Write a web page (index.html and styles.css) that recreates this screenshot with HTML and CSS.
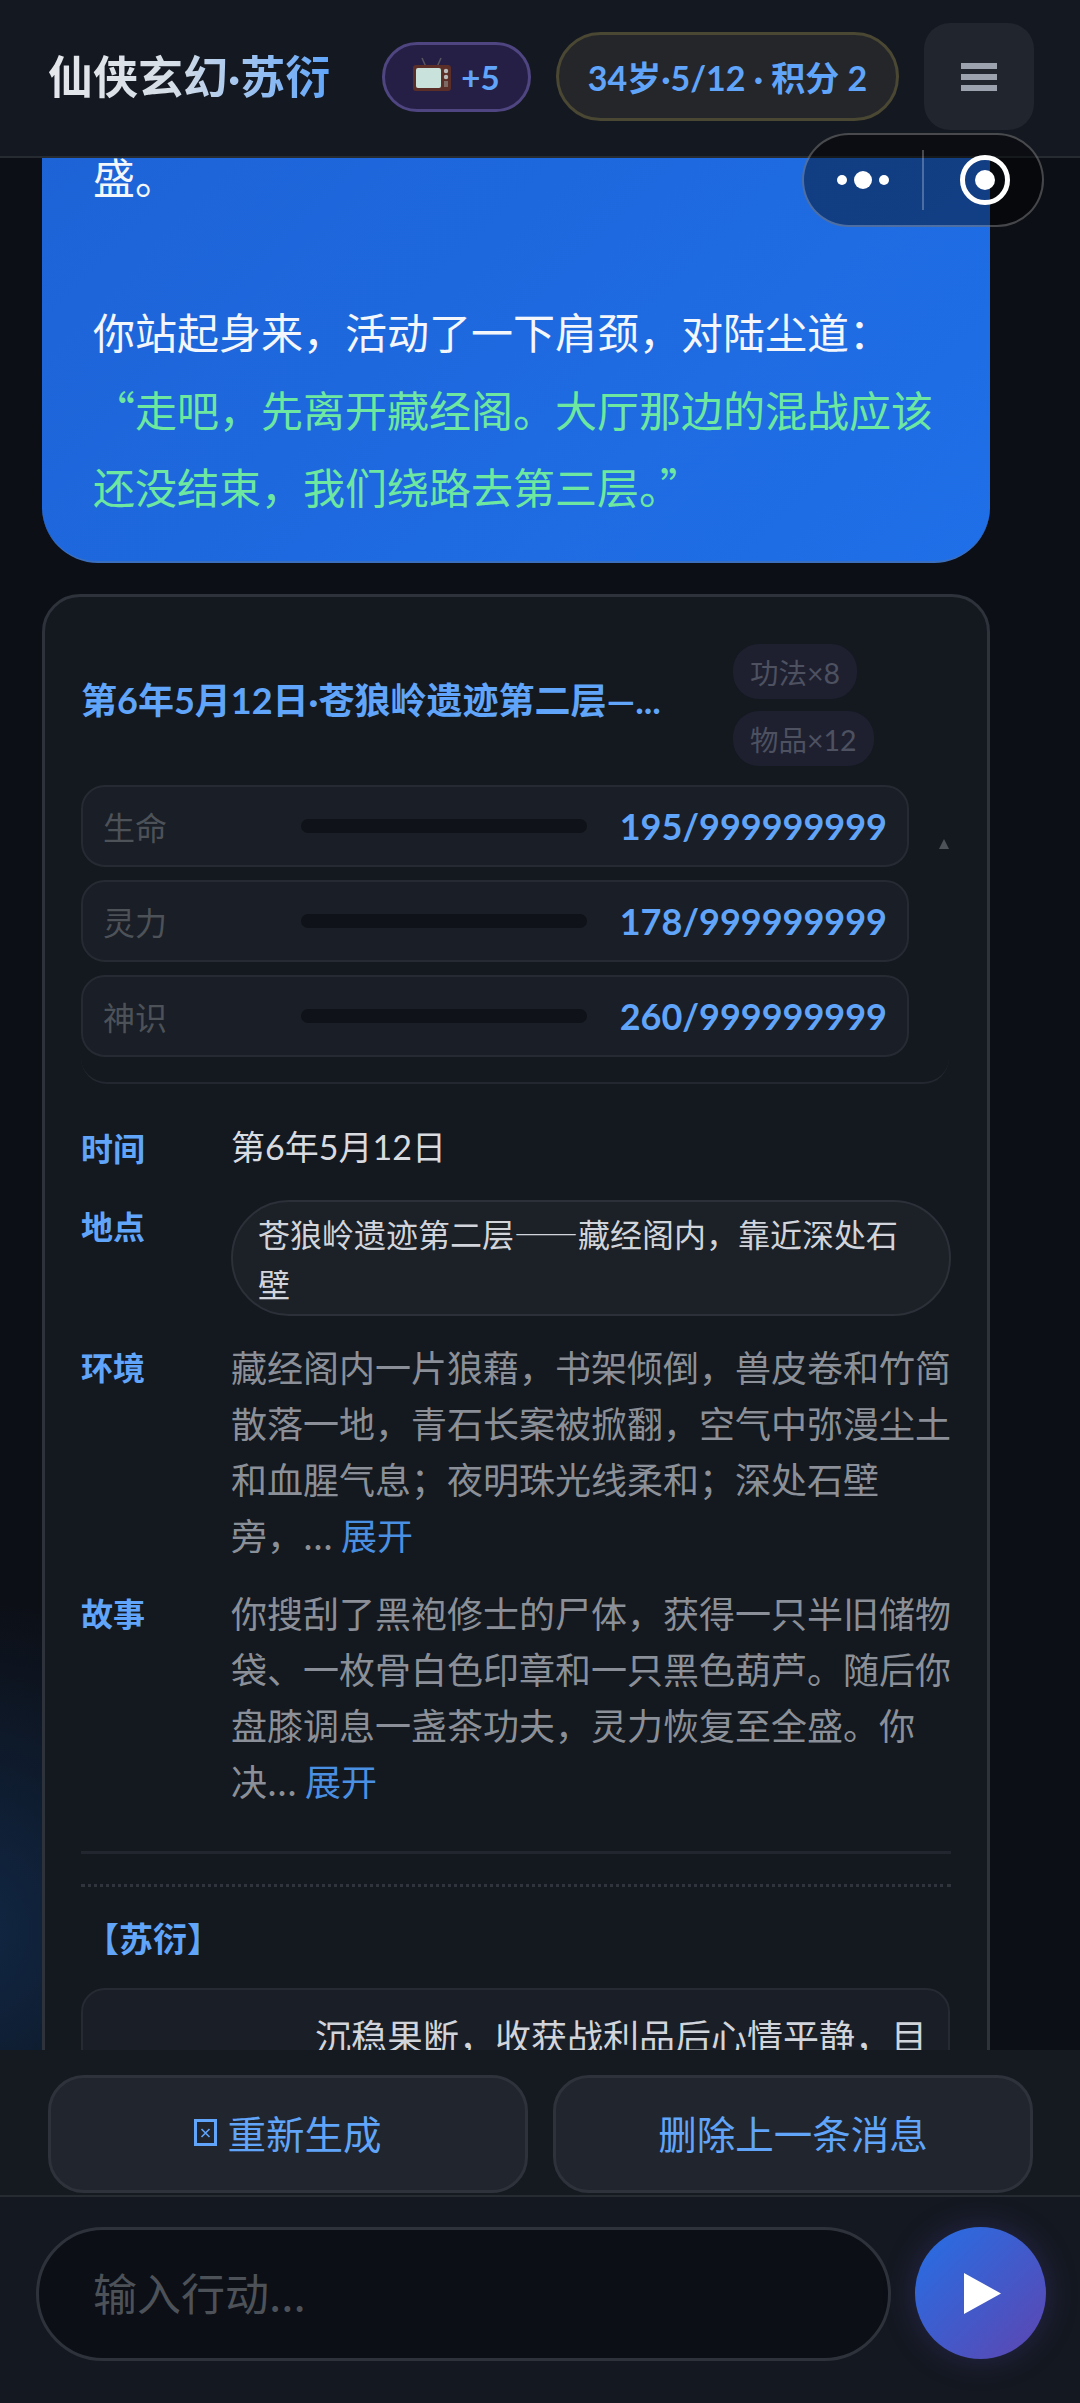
FILE: index.html
```html
<!DOCTYPE html>
<html lang="zh-CN">
<head>
    <meta charset="UTF-8">
    <meta name="viewport" content="width=device-width, initial-scale=1.0">
    <title>仙侠玄幻·苏衍</title>
    <link rel="stylesheet" href="styles.css">
</head>
<body>
    <header class="topbar">
        <h1 class="game-title">仙侠玄幻·苏衍</h1>
        <div class="topbar-right">
            <div class="ad-pill">
                <svg class="tv-icon" width="38" height="34" viewBox="0 0 38 34">
                    <path d="M13 10 L9 1 M24 10 L28 1" stroke="#5a5560" stroke-width="1.5" fill="none"/>
                    <rect x="0" y="8" width="38" height="26" rx="3" fill="#5b2f28"/>
                    <rect x="3" y="11" width="25" height="20" rx="2" fill="#c9e2dc"/>
                    <circle cx="33" cy="14" r="2.2" fill="#b9bcbc"/>
                    <circle cx="33" cy="20" r="2.2" fill="#b9bcbc"/>
                    <rect x="31" y="24" width="4" height="6" fill="#7d6a64"/>
                </svg>
                <span>+5</span>
            </div>
            <div class="score-pill">34岁·5/12 · 积分 2</div>
            <div class="menu-btn">
                <span></span>
                <span></span>
                <span></span>
            </div>
        </div>
    </header>

    <div class="capsule">
        <div class="capsule-dots">
            <i class="dot"></i>
            <i class="dot dot-big"></i>
            <i class="dot"></i>
        </div>
        <div class="capsule-target"><i></i></div>
    </div>

    <main class="chat">
        <div class="bubble">
            <p>盛。</p>
            <p class="bubble-gap">你站起身来&#65292;活动了一下肩颈&#65292;对陆尘道&#65306;</p>
            <p class="speech">“走吧&#65292;先离开藏经阁。大厅那边的混战应该还没结束&#65292;我们绕路去第三层。”</p>
        </div>

        <section class="card">
            <div class="card-head">
                <div class="card-title">第6年5月12日·苍狼岭遗迹第二层—...</div>
                <div class="tags">
                    <span class="tag">功法×8</span>
                    <span class="tag">物品×12</span>
                </div>
            </div>

            <div class="stats">
                <div class="stat-rows">
                    <div class="stat-row">
                        <span class="stat-name">生命</span>
                        <span class="stat-bar"></span>
                        <span class="stat-value">195/999999999</span>
                    </div>
                    <div class="stat-row">
                        <span class="stat-name">灵力</span>
                        <span class="stat-bar"></span>
                        <span class="stat-value">178/999999999</span>
                    </div>
                    <div class="stat-row">
                        <span class="stat-name">神识</span>
                        <span class="stat-bar"></span>
                        <span class="stat-value">260/999999999</span>
                    </div>
                </div>
                <div class="stat-scroll"><i class="scroll-arrow"></i></div>
            </div>

            <div class="info">
                <div class="info-row">
                    <div class="info-label">时间</div>
                    <div class="info-time">第6年5月12日</div>
                </div>
                <div class="info-row info-row-place">
                    <div class="info-label">地点</div>
                    <div class="info-place">苍狼岭遗迹第二层&#8212;&#8212;藏经阁内&#65292;靠近深处石壁</div>
                </div>
                <div class="info-row">
                    <div class="info-label">环境</div>
                    <div class="info-text">藏经阁内一片狼藉&#65292;书架倾倒&#65292;兽皮卷和竹简散落一地&#65292;青石长案被掀翻&#65292;空气中弥漫尘土和血腥气息&#65307;夜明珠光线柔和&#65307;深处石壁<br>旁&#65292;... <a class="more">展开</a></div>
                </div>
                <div class="info-row">
                    <div class="info-label">故事</div>
                    <div class="info-text">你搜刮了黑袍修士的尸体&#65292;获得一只半旧储物袋、一枚骨白色印章和一只黑色葫芦。随后你盘膝调息一盏茶功夫&#65292;灵力恢复至全盛。你<br>决... <a class="more">展开</a></div>
                </div>
            </div>

            <hr class="line-solid">
            <hr class="line-dotted">

            <div class="person-name">【苏衍】</div>
            <div class="person-box">沉稳果断&#65292;收获战利品后心情平静&#65292;目</div>
        </section>
    </main>

    <footer class="bottom">
        <div class="actions">
            <button class="action-btn">
                <svg class="retry-icon" width="23" height="27" viewBox="0 0 23 27">
                    <rect x="1.5" y="1.5" width="20" height="24" fill="none" stroke="#60a5fa" stroke-width="3"/>
                    <path d="M7.5 10 L15.5 18 M15.5 10 L7.5 18" stroke="#60a5fa" stroke-width="1.6"/>
                </svg>
                重新生成
            </button>
            <button class="action-btn">删除上一条消息</button>
        </div>
        <div class="input-bar">
            <div class="input-box">输入行动...</div>
            <button class="send-btn">
                <svg width="37" height="41" viewBox="0 0 37 41"><path d="M0 0 L37 20.5 L0 41 Z" fill="#fff"/></svg>
            </button>
        </div>
    </footer>
</body>
</html>
```

FILE: styles.css
```css
* {
    box-sizing: border-box;
}
html, body {
    margin: 0;
    height: 2403px;
}
body {
    display: flex;
    flex-direction: column;
    overflow: hidden;
    position: relative;
    font-family: "Noto Sans CJK SC", sans-serif;
    color: #d1d5db;
    background-color: #0c0f16;
    background-image: radial-gradient(circle at -40px 1930px, rgba(28, 92, 170, 0.32), transparent 330px);
}
p {
    margin: 0;
}

/* top bar */
.topbar {
    flex: none;
    height: 158px;
    display: flex;
    align-items: center;
    justify-content: space-between;
    padding: 0 46px 3px 48px;
    background-color: #141820;
    border-bottom: 2px solid #262b31;
    position: relative;
    z-index: 2;
}
.game-title {
    margin: 0;
    font-family: Lato, "Noto Sans CJK SC", sans-serif;
    font-size: 45px;
    font-weight: 700;
    line-height: 60px;
    white-space: nowrap;
    color: transparent;
    background: linear-gradient(90deg, #e5e7eb 0%, #d5dde6 45%, #60a5fa 100%);
    -webkit-background-clip: text;
    background-clip: text;
}
.topbar-right {
    display: flex;
    align-items: center;
    gap: 25px;
}
.ad-pill {
    width: 149px;
    height: 70px;
    display: flex;
    align-items: center;
    justify-content: center;
    gap: 10px;
    border-radius: 35px;
    background-color: #251f45;
    border: 3px solid #4f4580;
    font-family: Lato, "Noto Sans CJK SC", sans-serif;
    font-size: 33px;
    font-weight: 700;
    color: #60a5fa;
}
.tv-icon {
    margin-top: -6px;
}
.score-pill {
    width: 343px;
    height: 89px;
    display: flex;
    align-items: center;
    justify-content: center;
    border-radius: 45px;
    background-color: #25262a;
    border: 3px solid #4a4733;
    font-family: Lato, "Noto Sans CJK SC", sans-serif;
    font-size: 34px;
    font-weight: 700;
    color: #60a5fa;
    white-space: nowrap;
}
.menu-btn {
    width: 110px;
    height: 107px;
    display: flex;
    flex-direction: column;
    align-items: center;
    justify-content: center;
    gap: 5px;
    border-radius: 26px;
    background-color: #21252d;
}
.menu-btn span {
    width: 36px;
    height: 6px;
    background-color: #9ca3af;
}

/* mini program capsule sits over the page */
.capsule {
    position: absolute;
    top: 133px;
    right: 36px;
    z-index: 3;
    width: 242px;
    height: 94px;
    display: flex;
    align-items: center;
    border-radius: 47px;
    background-color: rgba(0, 0, 0, 0.42);
    border: 2px solid rgba(255, 255, 255, 0.25);
}
.capsule-dots {
    width: 120px;
    height: 60px;
    display: flex;
    align-items: center;
    justify-content: center;
    gap: 7px;
    border-right: 2px solid rgba(255, 255, 255, 0.25);
}
.dot {
    width: 10px;
    height: 10px;
    border-radius: 50%;
    background-color: #fff;
}
.dot-big {
    width: 18px;
    height: 18px;
}
.capsule-target {
    width: 50px;
    height: 50px;
    margin-left: 36px;
    display: flex;
    align-items: center;
    justify-content: center;
    border-radius: 50%;
    border: 5px solid #fff;
}
.capsule-target i {
    width: 20px;
    height: 20px;
    border-radius: 50%;
    background-color: #fff;
}

/* chat area */
.chat {
    flex: 1;
    min-height: 0;
    overflow: hidden;
    padding: 0 90px 0 42px;
}
.bubble {
    margin-top: -51px;
    padding: 30px 40px 36px 51px;
    border-radius: 0 0 56px 56px;
    background: linear-gradient(135deg, #1d63d6, #1f6fe8);
    border-bottom: 2px solid #3a6fc0;
    font-size: 42px;
    line-height: 77.5px;
    color: #f3f6fb;
}
.bubble-gap {
    margin-top: 77.5px;
}
.speech {
    color: #6ee7a0;
}

.card {
    margin-top: 31px;
    padding: 47px 36px 40px 36px;
    border: 3px solid #2e333b;
    border-radius: 38px;
    background-color: #14181f;
}
.card-head {
    display: flex;
    align-items: center;
    justify-content: space-between;
    padding-right: 80px;
}
.card-title {
    margin-bottom: 14px;
    font-family: Lato, "Noto Sans CJK SC", sans-serif;
    font-size: 36px;
    font-weight: 700;
    color: #60a5fa;
    white-space: nowrap;
}
.tags {
    width: 138px;
    display: flex;
    flex-direction: column;
    align-items: flex-start;
    gap: 12px;
}
.tag {
    height: 55px;
    padding: 0 17px;
    display: flex;
    align-items: center;
    border-radius: 26px;
    background-color: #1e2030;
    font-family: Lato, "Noto Sans CJK SC", sans-serif;
    font-size: 28.5px;
    color: #4d5160;
    white-space: nowrap;
}

.stats {
    width: 868px;
    margin-top: 19px;
    padding-bottom: 25px;
    display: flex;
    border-bottom: 2px solid #232830;
    border-radius: 0 0 26px 26px;
}
.stat-rows {
    width: 828px;
    display: flex;
    flex-direction: column;
    gap: 13px;
}
.stat-row {
    height: 82px;
    padding: 0 20px;
    display: flex;
    align-items: center;
    border: 2px solid #262b33;
    border-radius: 24px;
    background-color: #1a1e26;
}
.stat-name {
    width: 198px;
    font-size: 32px;
    color: #4d5259;
}
.stat-bar {
    width: 286px;
    height: 14px;
    border-radius: 7px;
    background-color: #0f1218;
}
.stat-value {
    margin-left: auto;
    font-family: Lato, sans-serif;
    font-size: 36px;
    font-weight: 700;
    color: #60a5fa;
}
.stat-scroll {
    flex: 1;
    display: flex;
    justify-content: flex-end;
    padding-top: 54px;
}
.scroll-arrow {
    width: 0;
    height: 0;
    border-left: 5px solid transparent;
    border-right: 5px solid transparent;
    border-bottom: 10px solid #4d5259;
}

/* info rows */
.info {
    margin-top: 35px;
    display: flex;
    flex-direction: column;
    gap: 22px;
}
.info-row {
    display: flex;
}
.info-row-place {
    margin-top: 3px;
}
.info-label {
    flex: none;
    width: 150px;
    font-size: 32px;
    font-weight: 700;
    line-height: 56px;
    color: #60a5fa;
}
.info-row-place .info-label {
    margin-top: -3px;
}
.info-time {
    font-family: Lato, "Noto Sans CJK SC", sans-serif;
    font-size: 34px;
    line-height: 56px;
    color: #d8dbe0;
}
.info-place {
    width: 720px;
    padding: 6px 25px 6px 25px;
    border: 2px solid #2c3038;
    border-radius: 58px;
    background-color: #1c2027;
    font-size: 32px;
    line-height: 50px;
    color: #d1d5db;
}
.info-text {
    width: 722px;
    font-size: 36px;
    line-height: 56px;
    color: #8b9098;
}
.more {
    color: #4a90e2;
}

.line-solid,
.line-dotted {
    width: 870px;
    margin: 0;
    border: 0;
}
.line-solid {
    margin-top: 43px;
    border-top: 3px solid #22262e;
}
.line-dotted {
    margin-top: 30px;
    border-top: 3px dotted #30343c;
}
.person-name {
    margin-top: 26px;
    padding-left: 4px;
    font-size: 34px;
    font-weight: 700;
    line-height: 50px;
    color: #60a5fa;
}
.person-box {
    width: 869px;
    height: 140px;
    margin-top: 25px;
    padding: 17px 20px 0 232px;
    border: 2px solid #262b33;
    border-radius: 24px;
    background-color: #1a1e26;
    font-size: 36px;
    line-height: 56px;
    color: #d1d5db;
    white-space: nowrap;
}

/* bottom panel */
.bottom {
    flex: none;
    position: relative;
    z-index: 2;
}
.actions {
    height: 145px;
    padding: 25px 47px 2px 48px;
    display: flex;
    gap: 25px;
    background-color: #151920;
}
.action-btn {
    flex: 1;
    display: flex;
    align-items: center;
    justify-content: center;
    gap: 10px;
    padding: 0 0 4px;
    border: 3px solid #2e333b;
    border-radius: 36px;
    background-color: #21252d;
    font-family: "Noto Sans CJK SC", sans-serif;
    font-size: 38.5px;
    color: #60a5fa;
}
.input-bar {
    height: 208px;
    padding: 30px 34px 0 36px;
    display: flex;
    gap: 24px;
    background-color: #141820;
    border-top: 2px solid #262b31;
}
.input-box {
    flex: 1;
    height: 134px;
    padding: 0 0 4px 54px;
    display: flex;
    align-items: center;
    border: 3px solid #2e333b;
    border-radius: 67px;
    background-color: #0c0f16;
    font-size: 44px;
    color: #4d5259;
}
.send-btn {
    flex: none;
    width: 131px;
    height: 132px;
    padding: 0 0 0 4px;
    display: flex;
    align-items: center;
    justify-content: center;
    border: 0;
    border-radius: 50%;
    background: linear-gradient(135deg, #2470e6, #5e45b0);
    box-shadow: 0 0 32px rgba(88, 80, 190, 0.28);
}
```
